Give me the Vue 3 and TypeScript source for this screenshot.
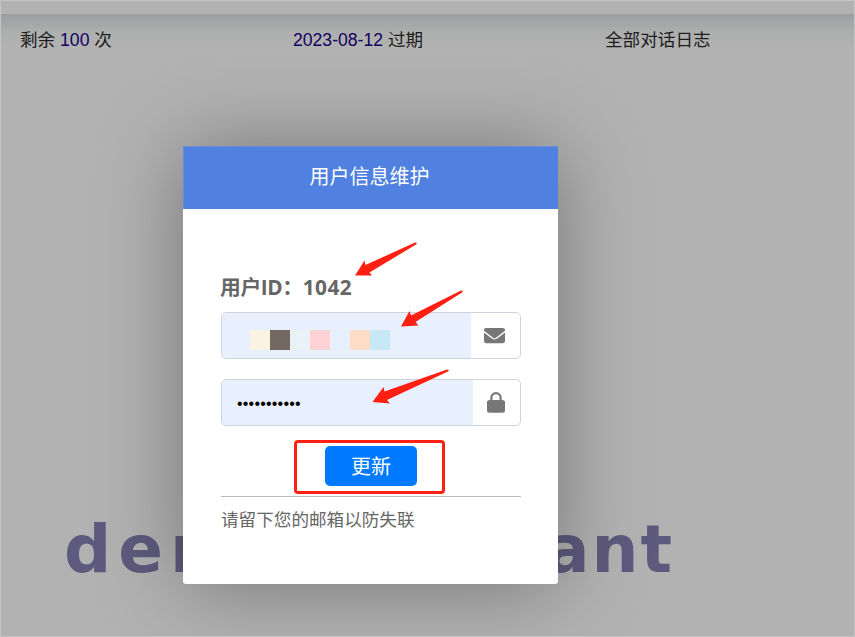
<script setup lang="ts">
import { ref } from 'vue'

interface Arrow {
  id: string
  points: string
}

const remaining = ref<number>(100)
const expiry = ref<string>('2023-08-12')
const userId = ref<number>(1042)
const password = ref<string>('•'.repeat(11))
const mosaic: string[] = ['cream', 'brown', 'mist', 'pink', 'clear', 'peach', 'sky']

const arrows: Arrow[] = [
  { id: 'id', points: '355,275.5 364.5,260.5 365.5,265 415,242.5 417,243 416,244.5 369.5,272.5 372,275.5' },
  { id: 'mail', points: '401,326.5 409.5,311 411,315.5 461,290.5 463,291 462,292.5 415.5,322 418.5,325.5' },
  { id: 'password', points: '372.5,402 383.5,387 384.5,391.5 447,369.5 449,370 448,371.5 387,400 390,403.5' },
]
</script>

<template>
  <div class="page">
    <div class="topbar"></div>
    <header class="stats">
      <span class="stat">剩余 <b>{{ remaining }}</b> 次</span>
      <span class="stat"><b>{{ expiry }}</b> 过期</span>
      <span class="stat">全部对话日志</span>
    </header>
    <div class="brand"><span>der</span><span class="brand-end">ant</span></div>

    <div class="overlay">
      <section class="card">
        <h1 class="title">用户信息维护</h1>
        <div class="content">
          <p class="user-id">用户ID：<span>{{ userId }}</span></p>
          <div class="field">
            <div class="value email">
              <i v-for="tone in mosaic" :key="tone" :class="tone"></i>
            </div>
            <div class="icon">
              <svg width="21" height="16" viewBox="0 0 21 16">
                <path d="M2 0h17A2 2 0 0 1 21 2V2.700L12 9.800Q10.500 11 9 9.800L0 2.700V2A2 2 0 0 1 2 0zM0 4.400L8.200 10.800Q10.500 12.400 12.800 10.800L21 4.400V13A2.300 2.300 0 0 1 18.700 15.300H2.300A2.300 2.300 0 0 1 0 13z" />
              </svg>
            </div>
          </div>
          <div class="field">
            <div class="value password">{{ password }}</div>
            <div class="icon lock">
              <svg width="18" height="21" viewBox="0 0 18 21">
                <path fill-rule="evenodd" d="M3.300 8V5.700a5.700 5.700 0 0 1 11.400 0V8h.8A2.500 2.500 0 0 1 18 10.500v7.700a2.500 2.500 0 0 1-2.500 2.500h-13A2.500 2.500 0 0 1 0 18.200v-7.700A2.500 2.500 0 0 1 2.500 8zM5.500 8h7V5.700a3.500 3.500 0 0 0-7 0z" />
              </svg>
            </div>
          </div>
          <div class="actions"><button type="button">更新</button></div>
          <p class="hint">请留下您的邮箱以防失联</p>
        </div>
      </section>
    </div>

    <svg class="arrows" width="855" height="637" viewBox="0 0 855 637">
      <polygon v-for="arrow in arrows" :key="arrow.id" :points="arrow.points" />
    </svg>
  </div>
</template>

<style>
body {
  margin: 0;
}
</style>

<style scoped>
.page {
  position: relative;
  box-sizing: border-box;
  width: 855px;
  height: 637px;
  overflow: hidden;
  display: flex;
  flex-direction: column;
  border: 1px solid #c4c4c4;
  background: #b2b2b2;
  color: #1c1c1c;
  font-family: "Liberation Sans", "Noto Sans CJK SC", sans-serif;
  font-size: 17.6px;
}
.topbar {
  height: 13px;
}
.stats {
  display: grid;
  grid-template-columns: 273px 312px 1fr;
  box-sizing: border-box;
  height: 60px;
  padding: 12px 0 0 19px;
  line-height: 28px;
  background: linear-gradient(#9b9d9f 0, #a3a5a6 8px, #adaeae 17px, #b2b2b2 32px);
}
.stat b {
  font-weight: 400;
  color: #11005f;
}
.brand {
  display: flex;
  justify-content: space-between;
  width: 610px;
  margin: 436px 0 0 63px;
  font: bold 66px/80px "DejaVu Sans", sans-serif;
  letter-spacing: 7px;
  color: #5e5a7d;
}
.brand-end {
  letter-spacing: 2px;
}
.overlay {
  position: absolute;
  inset: 0;
  display: flex;
  align-items: flex-start;
  padding: 145px 0 0 182px;
}
.card {
  width: 375px;
  height: 438px;
  border-radius: 3px;
  background: #fff;
  box-shadow: 0 2px 84px rgba(0, 0, 0, 0.34);
}
.title {
  margin: 0;
  height: 63px;
  box-sizing: border-box;
  border: 1px solid #6a8ed6;
  border-width: 1px 0 0 1px;
  padding-right: 3px;
  background: #5080e0;
  color: #fff;
  font-size: 20px;
  font-weight: 400;
  line-height: 61px;
  text-align: center;
}
.content {
  padding: 63px 37px 0 38px;
  color: #666;
}
.user-id {
  margin: 0 0 9px -1px;
  height: 31px;
  font: bold 20.8px/31px "Open Sans", "Noto Sans CJK SC", sans-serif;
  letter-spacing: -0.4px;
}
.user-id span {
  letter-spacing: 0.5px;
}
.field {
  display: flex;
  box-sizing: border-box;
  height: 47px;
  margin-bottom: 20px;
  border: 1px solid #ced4da;
  border-radius: 5px;
  overflow: hidden;
}
.value {
  flex: 1;
  display: flex;
  align-items: center;
  background: #e8f0fe;
}
.email {
  padding: 9px 0 0 28px;
}
.email i {
  width: 20px;
  height: 20px;
}
.cream { background: #faf3e2; }
.brown { background: #736963; }
.mist { background: #e9f2f6; }
.pink { background: #ffd3d5; }
.peach { background: #ffdcc5; }
.sky { background: #c6e8f7; }
.password {
  padding: 3px 0 0 15px;
  color: #000;
  font-size: 16px;
  letter-spacing: 0.2px;
}
.icon {
  display: flex;
  align-items: center;
  justify-content: center;
  box-sizing: border-box;
  width: 49px;
  padding-right: 2px;
  fill: #777;
}
.icon.lock {
  width: 47px;
}
.actions {
  display: flex;
  align-items: center;
  justify-content: center;
  box-sizing: border-box;
  width: 151px;
  height: 54px;
  margin: -6px 0 2px 73px;
  border: 3px solid #ff2012;
  border-radius: 4px;
  padding: 0 0 2px 3px;
}
button {
  width: 92px;
  height: 40px;
  border: 0;
  border-radius: 5px;
  padding: 0;
  background: #007bff;
  color: #fff;
  font: 400 20px/40px "Noto Sans CJK SC", sans-serif;
}
.hint {
  margin: 0;
  padding-top: 9px;
  border-top: 1px solid #bbb;
  line-height: 28px;
}
.arrows {
  position: absolute;
  top: -1px;
  left: -1px;
  fill: #ff2012;
}
</style>
